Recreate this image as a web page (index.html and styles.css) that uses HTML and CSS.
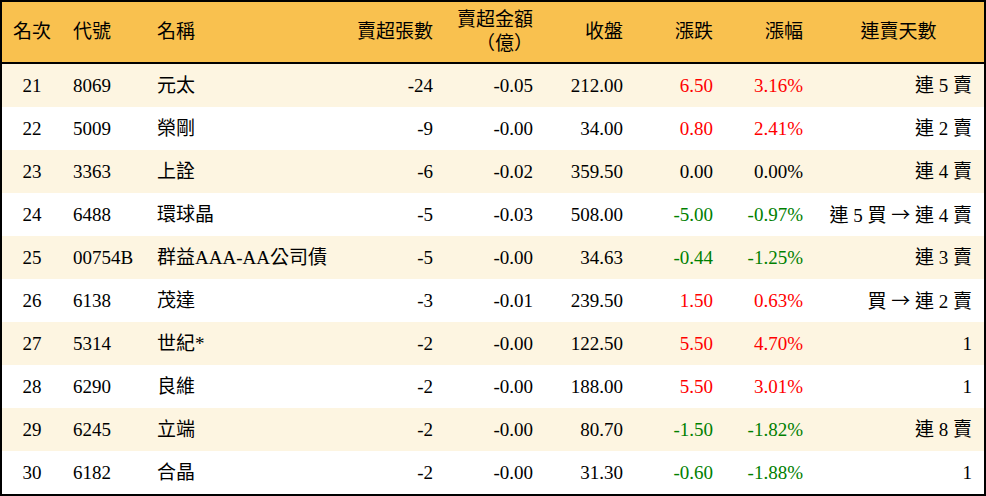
FILE: index.html
```html
<!DOCTYPE html>
<html lang="zh-Hant">
<head>
<meta charset="utf-8">
<link rel="stylesheet" href="styles.css">
</head>
<body>
<div class="board">
  <div class="row head">
    <div class="c c1">名次</div>
    <div class="c c2">代號</div>
    <div class="c c3">名稱</div>
    <div class="c r">賣超張數</div>
    <div class="c r two">賣超金額<br><span class="paren">（億）</span></div>
    <div class="c r">收盤</div>
    <div class="c r">漲跌</div>
    <div class="c r">漲幅</div>
    <div class="c c9h">連賣天數</div>
  </div>
  <div class="row alt">
    <div class="c c1">21</div><div class="c c2">8069</div><div class="c c3">元太</div>
    <div class="c r">-24</div><div class="c r">-0.05</div><div class="c r">212.00</div>
    <div class="c r up">6.50</div><div class="c r up">3.16%</div><div class="c c9">連 5 賣</div>
  </div>
  <div class="row">
    <div class="c c1">22</div><div class="c c2">5009</div><div class="c c3">榮剛</div>
    <div class="c r">-9</div><div class="c r">-0.00</div><div class="c r">34.00</div>
    <div class="c r up">0.80</div><div class="c r up">2.41%</div><div class="c c9">連 2 賣</div>
  </div>
  <div class="row alt">
    <div class="c c1">23</div><div class="c c2">3363</div><div class="c c3">上詮</div>
    <div class="c r">-6</div><div class="c r">-0.02</div><div class="c r">359.50</div>
    <div class="c r">0.00</div><div class="c r">0.00%</div><div class="c c9">連 4 賣</div>
  </div>
  <div class="row">
    <div class="c c1">24</div><div class="c c2">6488</div><div class="c c3">環球晶</div>
    <div class="c r">-5</div><div class="c r">-0.03</div><div class="c r">508.00</div>
    <div class="c r down">-5.00</div><div class="c r down">-0.97%</div><div class="c c9">連 5 買 <span class="arrow">→</span> 連 4 賣</div>
  </div>
  <div class="row alt">
    <div class="c c1">25</div><div class="c c2">00754B</div><div class="c c3">群益AAA-AA公司債</div>
    <div class="c r">-5</div><div class="c r">-0.00</div><div class="c r">34.63</div>
    <div class="c r down">-0.44</div><div class="c r down">-1.25%</div><div class="c c9">連 3 賣</div>
  </div>
  <div class="row">
    <div class="c c1">26</div><div class="c c2">6138</div><div class="c c3">茂達</div>
    <div class="c r">-3</div><div class="c r">-0.01</div><div class="c r">239.50</div>
    <div class="c r up">1.50</div><div class="c r up">0.63%</div><div class="c c9">買 <span class="arrow">→</span> 連 2 賣</div>
  </div>
  <div class="row alt">
    <div class="c c1">27</div><div class="c c2">5314</div><div class="c c3">世紀*</div>
    <div class="c r">-2</div><div class="c r">-0.00</div><div class="c r">122.50</div>
    <div class="c r up">5.50</div><div class="c r up">4.70%</div><div class="c c9">1</div>
  </div>
  <div class="row">
    <div class="c c1">28</div><div class="c c2">6290</div><div class="c c3">良維</div>
    <div class="c r">-2</div><div class="c r">-0.00</div><div class="c r">188.00</div>
    <div class="c r up">5.50</div><div class="c r up">3.01%</div><div class="c c9">1</div>
  </div>
  <div class="row alt">
    <div class="c c1">29</div><div class="c c2">6245</div><div class="c c3">立端</div>
    <div class="c r">-2</div><div class="c r">-0.00</div><div class="c r">80.70</div>
    <div class="c r down">-1.50</div><div class="c r down">-1.82%</div><div class="c c9">連 8 賣</div>
  </div>
  <div class="row">
    <div class="c c1">30</div><div class="c c2">6182</div><div class="c c3">合晶</div>
    <div class="c r">-2</div><div class="c r">-0.00</div><div class="c r">31.30</div>
    <div class="c r down">-0.60</div><div class="c r down">-1.88%</div><div class="c c9">1</div>
  </div>
</div>
</body>
</html>
```
FILE: styles.css
```css
* { box-sizing: border-box; }
html, body { margin: 0; padding: 0; background: #fff; }
body {
  font-family: "Liberation Serif", "Noto Sans CJK TC", serif;
  font-size: 19px;
  color: #000;
}
.board {
  width: 986px;
  height: 496px;
  border: 2px solid #000;
  background: #fff;
}
.row {
  display: grid;
  grid-template-columns: 60px 84px 198px 100px 100px 90px 90px 90px 170px;
  align-items: center;
  height: 43px;
  line-height: 22px;
  white-space: nowrap;
}
.row.head {
  height: 62px;
  background: #f9c14f;
  border-bottom: 2px solid #000;
  line-height: 22px;
}
.row.alt { background: #fdf5e1; }
.c { padding: 0 11px; }
.c1 { text-align: center; padding: 0; }
.c2, .c3 { text-align: left; }
.r { text-align: right; }
.c9 { text-align: right; padding-right: 12px; }
.c9h { text-align: center; padding-right: 12px; }
.paren { font-family: "Noto Sans CJK TC", sans-serif; }
.arrow { font-family: "Noto Sans CJK TC", sans-serif; }
.up { color: #ff0000; }
.down { color: #008000; }
```
